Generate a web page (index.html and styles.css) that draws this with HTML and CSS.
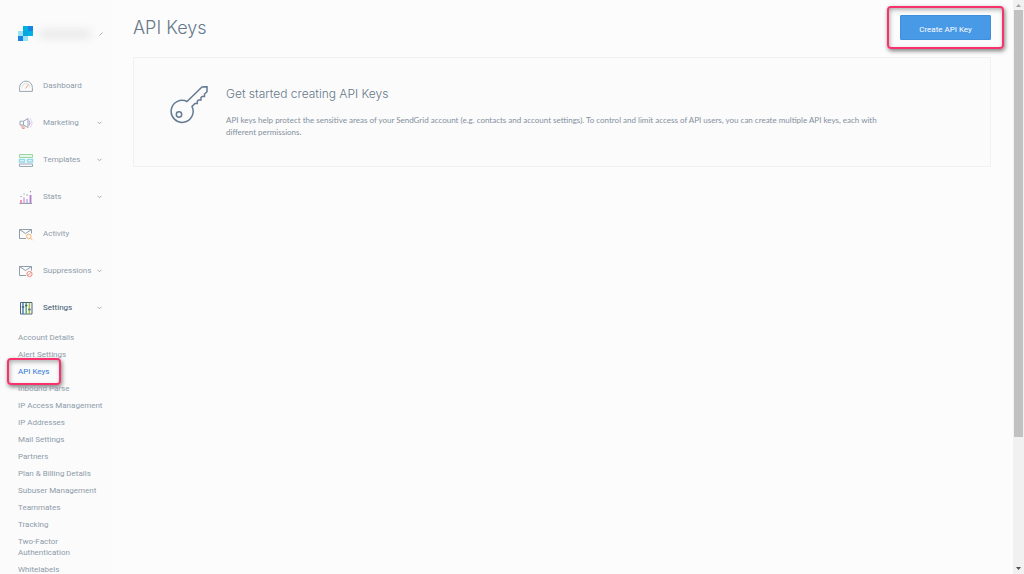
FILE: index.html
```html
<!DOCTYPE html>
<html lang="en">
<head>
    <meta charset="UTF-8">
    <meta name="viewport" content="width=device-width, initial-scale=1.0">
    <title>API Keys</title>
    <link rel="stylesheet" href="styles.css">
</head>
<body>
    <div class="app">

        <!-- Sidebar -->
        <aside class="sidebar">
            <div class="account">
                <svg class="logo" viewBox="0 0 15 15" shape-rendering="crispEdges">
                    <path fill="#99e1f4" d="M0 5h5v5H0zM5 10h5v5H5z"/>
                    <path fill="#00b2e3" d="M5 0h5v5H5zM5 5h10v5H5z"/>
                    <path fill="#1a82e2" d="M10 0h5v5h-5zM0 10h5v5H0z"/>
                    <path fill="#0aa5dc" d="M5 5h5v5H5z"/>
                </svg>
                <div class="account-name"></div>
                <svg class="account-arrow" viewBox="0 0 4 4"><path d="M.5 3.5l3-3"/></svg>
            </div>

            <nav>
                <a class="nav-item" href="#">
                    <svg class="icon" viewBox="0 0 14 14">
                        <path stroke="#9aa7b5" d="M.6 12.4V8.500a6.400 6.400 0 0 1 12.800 0v3.900z"/>
                        <path stroke="#e3e2dc" d="M3 8.500a4 4 0 0 1 8 0"/>
                        <path stroke="#f2a08a" d="M6.500 9.500l3-4"/>
                    </svg>
                    <span>Dashboard</span>
                </a>
                <a class="nav-item" href="#">
                    <svg class="icon" viewBox="0 0 14 14">
                        <path stroke="#9aa7b5" d="M1 5.200h3.500L9 2.500v9L4.500 9H1zM4.500 5.200V9"/>
                        <path stroke="#ed8d83" d="M2.500 9.200l1 3.300h1.800L4.600 9.500"/>
                        <path stroke="#a4a9d8" d="M10 4.500q2 2.500 0 5"/>
                        <path stroke="#ecccf0" d="M11 2.300q4 4.700 0 9.400"/>
                    </svg>
                    <span>Marketing</span>
                    <svg class="chevron" viewBox="0 0 5 4"><path d="M.5 .8l2 2 2-2"/></svg>
                </a>
                <a class="nav-item" href="#">
                    <svg class="icon" viewBox="0 0 14 14">
                        <path stroke="#9bd6a7" fill="#e6f6e9" d="M.5 1.500h13v3H.5z"/>
                        <path stroke="#93daeb" stroke-width="1.500" d="M.5 6.500h5v2.500h-5zM8.500 6.500h5v2.500h-5z"/>
                        <path stroke="#9aa7b5" d="M.5 11h13v2.500H.5z"/>
                    </svg>
                    <span>Templates</span>
                    <svg class="chevron" viewBox="0 0 5 4"><path d="M.5 .8l2 2 2-2"/></svg>
                </a>
                <a class="nav-item" href="#">
                    <svg class="icon" viewBox="0 0 14 14">
                        <path stroke="#8494a6" d="M.5 13.400h12.500"/>
                        <path stroke="#ee7a89" stroke-width="1.500" d="M2 10v3"/>
                        <path stroke="#d9a0e2" stroke-width="1.500" d="M5 7.500V13"/>
                        <path stroke="#b5b1ee" stroke-width="1.500" d="M8 9v4"/>
                        <path stroke="#b27acb" stroke-width="1.800" d="M11.500 5v8"/>
                        <path stroke="#8b99a8" stroke-width="1.200" d="M1.500 6.500h1.200M4.500 4h1.200M7.500 5.200h1.200M10.900 1.600h1.200"/>
                    </svg>
                    <span>Stats</span>
                    <svg class="chevron" viewBox="0 0 5 4"><path d="M.5 .8l2 2 2-2"/></svg>
                </a>
                <a class="nav-item" href="#">
                    <svg class="icon" viewBox="0 0 14 14">
                        <path stroke="#8f9dac" d="M7 11.500H.5v-9h12v4M.5 2.500l6 4 6-4"/>
                        <circle cx="9.800" cy="9.400" r="2.300" stroke="#f6b26b"/>
                        <path stroke="#f6b26b" d="M11.500 11.200l2 2"/>
                    </svg>
                    <span>Activity</span>
                </a>
                <a class="nav-item" href="#">
                    <svg class="icon" viewBox="0 0 14 14">
                        <path stroke="#8f9dac" d="M7 11.500H.5v-9h12v4M.5 2.500l6 4 6-4"/>
                        <circle cx="10.500" cy="10" r="2.600" stroke="#f0897b"/>
                        <path stroke="#f0897b" d="M8.700 11.800l3.600-3.600"/>
                    </svg>
                    <span>Suppressions</span>
                    <svg class="chevron" viewBox="0 0 5 4"><path d="M.5 .8l2 2 2-2"/></svg>
                </a>
                <a class="nav-item current" href="#">
                    <svg class="icon" viewBox="0 0 14 14">
                        <path stroke="#50657c" d="M1.500 1.500h11.500v11.500H1.500z"/>
                        <path stroke="#4d80bd" stroke-width="1.500" d="M4 2v11"/>
                        <path stroke="#56af70" stroke-width="1.500" d="M7.200 2v11"/>
                        <path stroke="#a9bc3c" stroke-width="1.500" d="M10.400 2v11"/>
                        <path stroke="#50657c" stroke-width="1.500" d="M2.800 6h2.400M6 4.500h2.400M9.200 8.500h2.400"/>
                    </svg>
                    <span>Settings</span>
                    <svg class="chevron" viewBox="0 0 5 4"><path d="M.5 .8l2 2 2-2"/></svg>
                </a>

                <ul class="sub-menu">
                    <li><a href="#">Account Details</a></li>
                    <li><a href="#">Alert Settings</a></li>
                    <li class="active"><a href="#">API Keys</a></li>
                    <li><a href="#">Inbound Parse</a></li>
                    <li><a href="#">IP Access Management</a></li>
                    <li><a href="#">IP Addresses</a></li>
                    <li><a href="#">Mail Settings</a></li>
                    <li><a href="#">Partners</a></li>
                    <li><a href="#">Plan &amp; Billing Details</a></li>
                    <li><a href="#">Subuser Management</a></li>
                    <li><a href="#">Teammates</a></li>
                    <li><a href="#">Tracking</a></li>
                    <li><a href="#">Two-Factor<br>Authentication</a></li>
                    <li><a href="#">Whitelabels</a></li>
                </ul>
            </nav>
        </aside>

        <!-- Content -->
        <main class="content">
            <header class="page-header">
                <h1>API Keys</h1>
                <div class="create">
                    <button class="create-button" type="button">Create API Key</button>
                </div>
            </header>

            <section class="card">
                <svg class="key" viewBox="0 0 38 38">
                    <path d="M17 15.500L32 1l5-.3v5L34.500 8v2.500H32l-1 1V14h-2.500l-1.200 1.200v2.300H25l-3 3A11 11 0 1 1 17 15.500z"/>
                    <circle cx="9" cy="28.500" r="2.700"/>
                </svg>
                <div class="card-text">
                    <h2>Get started creating API Keys</h2>
                    <p>API keys help protect the sensitive areas of your SendGrid account (e.g. contacts and account settings). To control and limit access of API users, you can create multiple API keys, each with different permissions.</p>
                </div>
            </section>
        </main>

        <!-- Scrollbar -->
        <div class="scrollbar">
            <svg class="scroll-arrow" viewBox="0 0 11 10"><path fill="#a3a3a3" d="M3 7l2.500-3L8 7z"/></svg>
            <div class="track"><div class="thumb"></div></div>
            <svg class="scroll-arrow" viewBox="0 0 11 10"><path fill="#505050" d="M3 3l2.500 3L8 3z"/></svg>
        </div>
    </div>
</body>
</html>
```
FILE: styles.css
```css
*,
*::after {
    box-sizing: border-box;
}

body {
    margin: 0;
    background-color: #fcfcfc;
    color: #84909d;
    font-family: Roboto, "Liberation Sans", sans-serif;
    font-size: 8px;
}

h1, h2, p, ul {
    margin: 0;
    padding: 0;
}

a {
    color: inherit;
    text-decoration: none;
}

.app {
    display: flex;
    height: 100vh;
    overflow: hidden;
}

/* Sidebar */
.sidebar {
    flex: 0 0 111px;
    padding-left: 18px;
    background-color: #fbfbfb;
    color: #8e9baa;
}

.account {
    display: flex;
    align-items: center;
    gap: 6px;
    height: 67px;
}

.logo {
    width: 15px;
    height: 15px;
}

.account-name {
    width: 52px;
    height: 8px;
    border-radius: 4px;
    background-color: #e6e7e8;
    filter: blur(4px);
}

.account-arrow {
    width: 4px;
    height: 4px;
    margin-left: 2px;
}

.account-arrow path,
.chevron path {
    fill: none;
    stroke: #a0acb8;
    stroke-width: 1;
}

.nav-item {
    display: flex;
    align-items: center;
    height: 37px;
    padding: 0 9px 0 1px;
}

.icon {
    width: 14px;
    height: 14px;
    margin-right: 10px;
    overflow: visible;
    fill: none;
}

.chevron {
    width: 5px;
    height: 4px;
    margin-left: auto;
}

.current {
    color: #40566c;
}

.sub-menu {
    padding-top: 3px;
    list-style: none;
    line-height: 11px;
}

.sub-menu li {
    position: relative;
    padding: 3px 0;
    white-space: nowrap;
}

.sub-menu .active {
    color: #3378d8;
}

/* Pink highlight frames */
.active::after,
.create::after {
    content: "";
    position: absolute;
    border: 2px solid #f8326d;
    border-radius: 4px;
    box-shadow: 1px 2px 4px rgba(0, 0, 0, 0.5), inset 1px 2px 4px rgba(0, 0, 0, 0.3);
    pointer-events: none;
}

.active::after {
    top: -5px;
    left: -11px;
    width: 54px;
    height: 27px;
}

/* Content */
.content {
    flex: 1;
    min-width: 0;
    padding: 15px 22px;
}

.page-header {
    display: flex;
    justify-content: space-between;
    align-items: flex-start;
    height: 42px;
}

h1,
h2 {
    color: #66788a;
    font-family: Inter, "Liberation Sans", sans-serif;
    font-weight: 300;
}

h1 {
    font-size: 18px;
    line-height: 26px;
}

.create {
    position: relative;
}

.create::after {
    inset: -9px -13px;
}

.create-button {
    display: block;
    width: 91px;
    height: 25px;
    padding: 3px 0 0;
    border: 1px solid #3f8fdc;
    border-radius: 1px;
    background-color: #4899e6;
    color: #fff;
    font-family: inherit;
    font-size: 8px;
}

.card {
    display: flex;
    gap: 18px;
    padding: 28px 112px 28px 36px;
    border: 1px solid #f0f1f2;
    background-color: #fbfbfb;
}

.key {
    flex: none;
    width: 38px;
    height: 38px;
    fill: none;
    stroke: #647b93;
    stroke-width: 1.5;
}

h2 {
    margin-bottom: 12px;
    font-size: 12px;
    line-height: 16px;
}

.card-text p {
    font-family: Lato, "Liberation Sans", sans-serif;
    line-height: 12px;
}

/* Scrollbar */
.scrollbar {
    display: flex;
    flex-direction: column;
    flex: 0 0 11px;
    background-color: #f1f1f1;
}

.scroll-arrow {
    width: 11px;
    height: 10px;
}

.track {
    flex: 1;
    padding: 0 1px;
}

.thumb {
    height: 77%;
    background-color: #c1c1c1;
}
```
